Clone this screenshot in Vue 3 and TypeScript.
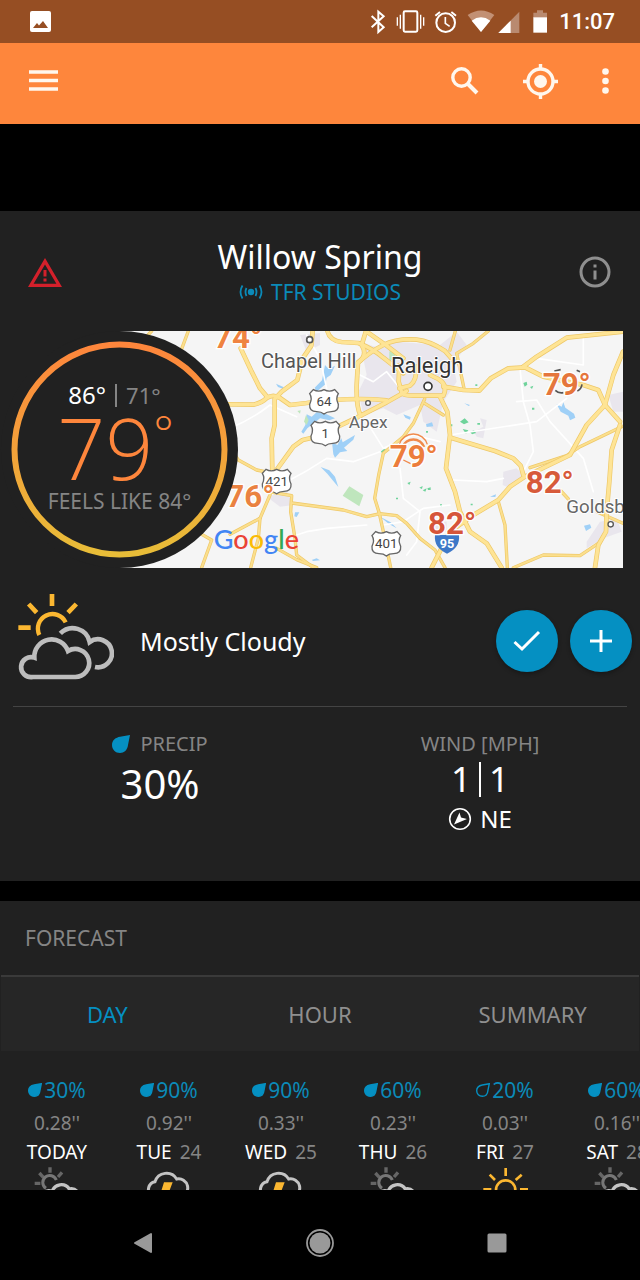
<script setup lang="ts">
import { ref } from 'vue'

type Sky = 'partly' | 'storm' | 'sunny'
interface Day {
  name: string
  date: string
  chance: string
  amount: string
  sky: Sky
  hollow?: boolean
}
interface Reading {
  temp: string
  x: number
  y: number
  color: string
}
interface Shield {
  n: string
  x: number
  y: number
}

const tabs = ['DAY', 'HOUR', 'SUMMARY']
const activeTab = ref('DAY')

const days: Day[] = [
  { name: 'TODAY', date: '', chance: '30%', amount: "0.28''", sky: 'partly' },
  { name: 'TUE', date: '24', chance: '90%', amount: "0.92''", sky: 'storm' },
  { name: 'WED', date: '25', chance: '90%', amount: "0.33''", sky: 'storm' },
  { name: 'THU', date: '26', chance: '60%', amount: "0.23''", sky: 'partly' },
  { name: 'FRI', date: '27', chance: '20%', amount: "0.03''", sky: 'sunny', hollow: true },
  { name: 'SAT', date: '28', chance: '60%', amount: "0.16''", sky: 'partly' },
]

const dropPath = 'M18 0 L16 10 C15.500 15 12 18 8 18 C3.500 18 0 14.500 0 10 C0 5 4 2.500 8 1.800 Z'

const highways: string[] = [
  'M240 237 L400 239 Q425 234 440 219 Q460 206 480 219 L510 240 L560 234 Q690 215 800 226',
  'M578 18 L574 62 L548 100 L532 165 L485 200 L464 222 L464 300 L455 340 L457 440',
  'M362 70 L395 140 L420 190 L442 216',
  'M622 18 Q630 48 665 51 L715 54 Q760 72 790 98 L850 145',
  'M738 18 L725 60 Q745 92 714 112 L710 180 Q708 245 722 272',
  'M712 115 Q750 80 790 60 Q830 40 890 44 Q930 48 975 78 L1005 112',
  'M740 20 L800 62 L850 100',
  'M838 120 L836 170 L846 205 Q856 212 880 212 L970 212 Q985 180 955 162 L930 150',
  'M888 125 Q892 165 870 182 L838 190',
  'M455 455 L520 365 L548 345 L590 335 L710 278 L800 232 L860 198',
  'M970 185 L1030 195 L1078 197 L1112 160 L1165 130 L1215 127 L1270 155 L1390 180 L1435 195 L1455 240 L1500 290',
  'M1210 125 L1250 95 L1340 38 L1509 20',
  'M1509 80 L1480 150 L1455 240 L1400 300 L1350 390 L1215 455 L1170 485 L1135 525 L1060 570 L990 620 L935 728',
  'M1500 300 L1475 375 L1468 470 L1460 560 L1458 620 L1435 660 L1425 728',
  'M960 215 L982 260 L990 330 L978 430 L1005 500 L1020 560 L1050 620 L1100 655 L1145 728',
  'M992 338 L1125 378 L1180 400 L1202 422 L1210 450',
]
const roads: string[] = [
  'M1006 18 L990 75',
  'M1105 18 L1060 55 L1010 85 L1032 190',
  'M1505 305 L1380 365 L1340 392 L1230 428',
  'M1135 530 L1155 600 L1162 728',
  'M1180 728 L1270 690 L1380 692 L1435 655',
  'M914 222 L880 295 L850 335 L790 385 L776 450 L764 520 L778 565 L790 620 L812 728',
  'M515 534 L670 555 L740 575 L780 566 L830 572 L860 595 L900 640 L945 675 L975 728',
  'M330 370 L355 405 L410 435 L460 445 L450 510 L420 580 L415 640 L392 728',
  'M420 580 L330 628',
  'M445 500 L515 512 L512 560 L525 640 L530 690 L580 728',
  'M470 670 L530 704 L590 728',
  'M205 18 L180 85',
  'M95 18 L80 34',
  'M240 625 L275 645 L245 728',
  'M914 235 L970 270',
  'M1320 495 L1345 522',
  'M1430 560 L1509 595',
]
const lanes: string[] = [
  'M330 310 Q400 280 450 240 L530 275',
  'M500 470 Q560 440 620 400 L700 410 L780 380',
  'M500 640 L560 620 L620 610 L740 600',
  'M560 30 L600 100 L620 190',
  'M740 290 L790 370 L880 330 L960 350',
  'M720 150 L760 170 L800 140 L840 190',
  'M990 330 L1250 290 L1340 220',
  'M1200 130 L1210 230 L1230 300 L1240 380 L1210 440',
  'M1190 230 L1250 225 L1290 290 L1390 400 L1420 500',
  'M1000 465 L1100 470 L1150 460',
  'M1390 30 L1390 120 L1250 100',
  'M840 430 L850 520 L900 560 L890 650 L860 690',
  'M790 600 L850 590 L910 550 L990 540',
]
const readings: Reading[] = [
  { temp: '74°', x: 282, y: 70, color: '#ef8340' },
  { temp: '79°', x: 809, y: 427, color: '#ec7d3c' },
  { temp: '76°', x: 319, y: 545, color: '#ea8241' },
  { temp: '79°', x: 1268, y: 209, color: '#e5763c' },
  { temp: '82°', x: 1217, y: 505, color: '#d75a3a' },
  { temp: '82°', x: 924, y: 628, color: '#d6553a' },
]
const shields: Shield[] = [
  { n: '64', x: 612, y: 230 },
  { n: '1', x: 616, y: 325 },
  { n: '421', x: 470, y: 469 },
  { n: '401', x: 799, y: 656 },
]
const shieldPath =
  'M-32 -36 Q-16 -27 0 -36 Q16 -27 32 -36 L43 -24 Q34 -10 43 8 Q45 30 22 30 Q8 30 0 37 Q-8 30 -22 30 Q-45 30 -43 8 Q-34 -10 -43 -24 Z'
</script>

<template>
  <div class="shell">
    <div class="status">
      <svg class="notif" viewBox="0 0 21 21" aria-hidden="true">
        <rect width="21" height="21" rx="2" fill="#fff" />
        <path d="M3 17 L7 12 L9 14.500 L13 10 L18 17 Z" fill="#964e23" />
      </svg>
      <svg class="sysicons" viewBox="90 24 540 81" fill="none" stroke="#fff" aria-hidden="true">
        <path d="M98 48 L134 82 L118 96 V35 L134 49 L98 82" stroke-width="6" />
        <rect x="194" y="34" width="41" height="61" rx="4" stroke-width="6" />
        <path d="M184 44 V86 M175 52 V77 M245 44 V86 M254 52 V77" stroke-width="4" />
        <circle cx="320" cy="68" r="28" stroke-width="6" />
        <path d="M319 51 V70 L332 79" stroke-width="5" />
        <path d="M289 47 L303 36 M351 47 L337 36" stroke-width="6" />
        <path d="M386 45 Q426 18 466 45 L426 96 Z" fill="#c29074" stroke="none" />
        <path d="M398 62 Q426 42 454 62 L426 96 Z" fill="#fff" stroke="none" />
        <path d="M541 35 V99 H478 Z" fill="#b98a70" stroke="none" />
        <path d="M515 62 V99 H478 Z" fill="#fff" stroke="none" />
        <path d="M583 38 H594 V31 H612 V38 H624 V54 H583 Z" fill="#b98a70" stroke="none" />
        <path d="M583 52 H624 V98 H583 Z" fill="#fff" stroke="none" />
      </svg>
      <span class="clock">11:07</span>
    </div>

    <header class="toolbar">
      <button class="bare" aria-label="Menu">
        <svg width="29" height="22" viewBox="0 0 29 22"><path d="M0 2 H29 M0 10.500 H29 M0 19 H29" stroke="#fff7ee" stroke-width="3.500" /></svg>
      </button>
      <div class="actions">
        <button class="bare" aria-label="Search">
          <svg width="28" height="28" viewBox="0 0 28 28" fill="none" stroke="#fff7ee"><circle cx="10.500" cy="10.500" r="8.700" stroke-width="3.400" /><path d="M17 17 L26 26" stroke-width="4" /></svg>
        </button>
        <button class="bare" aria-label="My location">
          <svg width="35" height="35" viewBox="0 0 35 35" fill="none" stroke="#fff7ee" stroke-width="3.400"><circle cx="17.500" cy="17.500" r="12.500" /><circle cx="17.500" cy="17.500" r="6.500" fill="#fff7ee" stroke="none" /><path d="M17.500 0 V5 M17.500 30 V35 M0 17.500 H5 M30 17.500 H35" /></svg>
        </button>
        <button class="bare" aria-label="More options">
          <svg width="7" height="26" viewBox="0 0 7 26" fill="#fff7ee"><circle cx="3.500" cy="3.500" r="3.300" /><circle cx="3.500" cy="13" r="3.300" /><circle cx="3.500" cy="22.500" r="3.300" /></svg>
        </button>
      </div>
    </header>

    <main class="content">
      <section class="card">
        <div class="place">
          <button class="bare" aria-label="Weather alert">
            <svg width="34" height="29" viewBox="0 0 34 29"><path d="M17 0 L34 29 H0 Z M17 6.500 L5.600 25.800 H28.400 Z" fill="#d3202b" fill-rule="evenodd" /><path d="M17 12 V18.500 M17 20.500 V23.500" stroke="#d3202b" stroke-width="3" /></svg>
          </button>
          <div class="names">
            <h1>Willow Spring</h1>
            <a href="#station">
              <svg width="24" height="14" viewBox="0 0 24 14" fill="none" stroke="#0b8ab8" stroke-width="1.800" aria-hidden="true"><circle cx="12" cy="7" r="3.200" fill="#0b8ab8" stroke="none" /><path d="M7.500 3 Q5.500 7 7.500 11 M16.500 3 Q18.500 7 16.500 11 M3.500 0.500 Q-0.500 7 3.500 13.500 M20.500 0.500 Q24.500 7 20.500 13.500" /></svg>
              <span>TFR STUDIOS</span>
            </a>
          </div>
          <button class="bare" aria-label="Information">
            <svg width="32" height="32" viewBox="0 0 32 32" fill="none" stroke="#8f8f8f" stroke-width="3"><circle cx="16" cy="16" r="14" /><path d="M16 14.500 V23.500 M16 8.500 V11.500" /></svg>
          </button>
        </div>

        <div class="hero">
          <svg class="map" viewBox="0 18 1509 711" preserveAspectRatio="xMidYMid slice" role="img" aria-label="Temperature map">
            <rect y="18" width="1509" height="711" fill="#f5f5f5" />
            <g fill="#e9e6ed">
              <path d="M720 50 L780 70 L830 50 L960 60 L1010 20 L1040 60 L1000 120 L1010 170 L970 230 L950 320 L910 290 L900 240 L830 270 L790 250 L730 270 L715 200 L740 150 Z" />
              <path d="M540 30 L600 24 L600 60 L560 80 Z M1150 440 L1190 430 L1210 450 L1170 490 L1148 480 Z M1440 590 L1490 580 L1505 620 L1450 640 L1400 670 L1400 650 Z" />
              <path d="M1062 320 L1090 305 L1080 280 L1100 285 L1090 340 L1070 335 Z M1465 210 L1509 200 L1509 260 L1480 260 Z M440 515 L500 500 L520 540 L480 545 Z M930 590 L980 590 L980 620 L940 620 Z M815 100 L835 90 L840 130 L815 140 Z" />
            </g>
            <g fill="#9fd0f7">
              <path d="M615 120 L626 132 L645 122 L632 150 L620 158 L616 178 L590 200 L584 188 L606 166 Z" />
              <path d="M560 268 L575 275 L590 262 L620 268 L645 280 L628 286 L600 280 L585 292 L562 310 L550 326 L544 320 L556 300 Z" />
              <path d="M636 352 L652 360 L664 340 L668 352 L705 330 L700 344 L672 368 L682 378 L660 382 L645 398 L640 388 Z" />
              <path d="M602 426 L628 436 L645 455 L655 486 L638 466 L622 446 Z M468 176 L490 186 L490 192 L474 186 Z M525 562 L538 562 L530 576 L523 574 Z M575 705 L590 700 L600 706 L580 708 Z" />
              <path d="M1310 238 L1325 245 L1330 232 L1336 248 L1362 266 L1366 278 L1350 286 L1345 272 L1322 260 Z M1392 602 L1410 598 L1414 608 L1398 618 Z M1110 515 L1128 508 L1126 516 Z M1033 235 L1050 240 L1046 243 Z M850 268 L872 276 L870 284 L856 278 Z M918 298 L936 292 L940 304 L920 306 Z M780 575 L812 592 L830 610 L806 596 Z" />
            </g>
            <g fill="#bfe6bd">
              <path d="M688 484 L730 510 L718 544 L668 512 Z" />
              <path d="M808 80 L818 68 L828 96 L808 110 Z" />
              <path d="M558 270 L566 285 L560 300 L552 290 Z M532 258 L542 256 L540 266 Z" />
            </g>
            <g fill="#6fd39b">
              <path d="M1020 290 L1034 280 L1046 292 L1032 298 Z M1028 312 L1045 316 L1038 326 Z M1050 320 L1062 316 L1068 324 L1056 328 Z M990 298 h7 v6 h-7 Z M1072 294 h8 v5 h-8 Z M1210 174 l10 -4 l2 9 l-8 6 Z M1230 186 l10 -4 l-4 10 Z M1236 248 h7 v6 h-7 Z M1066 178 h6 v5 h-6 Z M988 322 h8 v8 h-8 Z" />
              <path d="M782 380 L792 372 L802 376 L790 386 Z M862 474 l10 -4 l-4 10 Z M898 488 l10 -5 l-2 9 Z M908 496 l12 -6 l-4 10 Z M922 490 l10 -3 v8 h-8 Z M828 518 h6 v5 h-6 Z M960 538 h6 v8 h-6 Z M1052 536 h6 v5 h-6 Z M918 318 h6 v5 h-6 Z" />
            </g>
            <g fill="none" stroke-linejoin="round" stroke-linecap="round">
              <path v-for="d in lanes" :key="d" :d="d" stroke="#fff" stroke-width="5" />
              <path v-for="d in roads" :key="'c' + d" :d="d" stroke="#eec868" stroke-width="10" />
              <path v-for="d in roads" :key="'i' + d" :d="d" stroke="#fbdf8d" stroke-width="6" />
              <path v-for="d in highways" :key="'c' + d" :d="d" stroke="#eec868" stroke-width="14" />
              <path v-for="d in highways" :key="'i' + d" :d="d" stroke="#fee495" stroke-width="10" />
            </g>
            <g fill="#fff" stroke="#555" stroke-width="5">
              <circle cx="569" cy="44" r="9" />
              <circle cx="924" cy="184" r="12" stroke="#333" />
              <circle cx="744" cy="234" r="7" stroke-width="4" />
              <circle cx="1472" cy="598" r="8" stroke-width="4" />
            </g>
            <g class="towns">
              <text x="423" y="129" font-size="60" fill="#555">Chapel Hill</text>
              <text x="813" y="143" font-size="66" fill="#333">Raleigh</text>
              <text x="686" y="308" font-size="52" fill="#666">Apex</text>
              <text x="1339" y="564" font-size="56" fill="#666">Goldsboro</text>
            </g>
            <g v-for="s in shields" :key="s.n" class="shield" :transform="`translate(${s.x} ${s.y})`">
              <path :d="shieldPath" fill="#fff" stroke="#666" stroke-width="4" />
              <text y="14" text-anchor="middle" font-size="40" fill="#444">{{ s.n }}</text>
            </g>
            <path d="M1303 138 L1322 134 M1370 136 L1380 140 M1386 178 Q1384 192 1372 198 M1306 196 Q1316 206 1330 203" fill="none" stroke="#555" stroke-width="5" />
            <g transform="translate(981 652)">
              <path d="M-36 -22 H36 Q40 16 0 34 Q-40 16 -36 -22 Z" fill="#3d78c8" />
              <text y="16" text-anchor="middle" font-size="38" font-weight="700" fill="#fff" class="route">95</text>
            </g>
            <g fill="none" stroke="#f08a4c" stroke-width="4">
              <path d="M838 358 A44 44 0 0 1 922 358" />
              <path d="M848 366 A34 34 0 0 1 912 366" stroke-width="8" />
              <path d="M850 405 L872 416" />
            </g>
            <g class="readings">
              <text v-for="r in readings" :key="r.x" :x="r.x" :y="r.y" :fill="r.color">{{ r.temp }}</text>
            </g>
            <text class="wordmark" x="281" y="672"><tspan fill="#4285f4">G</tspan><tspan fill="#ea4335">o</tspan><tspan fill="#fbbc05">o</tspan><tspan fill="#4285f4">g</tspan><tspan fill="#34a853">l</tspan><tspan fill="#ea4335">e</tspan></text>
          </svg>

          <div class="gauge">
            <svg class="ring" viewBox="0 0 237 237" aria-hidden="true">
              <defs>
                <linearGradient id="heat" x1="0" y1="0" x2="0" y2="1">
                  <stop offset="0" stop-color="#fe863c" />
                  <stop offset="1" stop-color="#e8bd38" />
                </linearGradient>
              </defs>
              <circle cx="118.500" cy="118.500" r="105" fill="none" stroke="url(#heat)" stroke-width="6" />
            </svg>
            <div class="range">
              <span class="high">86°</span>
              <span class="bar"></span>
              <span class="low">71°</span>
            </div>
            <div class="now"><span>79</span><span class="deg">°</span></div>
            <div class="feels">FEELS LIKE 84°</div>
          </div>
        </div>

        <div class="condition">
          <svg class="sky" viewBox="54 42 288 282" fill="none" aria-hidden="true">
            <g stroke="#fbb731" stroke-width="14">
              <path d="M156 42 V78 M86 72 L110 98 M229 72 L204 98 M55 143 H92" />
              <path d="M118 165 A43 43 0 1 1 197 127" stroke-width="13" />
            </g>
            <g stroke="#bdbdbd" stroke-width="14">
              <path d="M181 160 A52 52 0 0 1 269 186 A42 42 0 1 1 285 261" />
              <path d="M98 291 A30 30 0 1 1 103 233 A52 52 0 0 1 204 213 A42 42 0 1 1 224 291 Z" />
            </g>
          </svg>
          <p>Mostly Cloudy</p>
          <button class="fab" aria-label="Confirm conditions">
            <svg width="28" height="22" viewBox="0 0 28 22"><path d="M1.500 12 L9 19 L26 2" fill="none" stroke="#fff" stroke-width="3" /></svg>
          </button>
          <button class="fab" aria-label="Add report">
            <svg width="22" height="22" viewBox="0 0 22 22"><path d="M11 0 V22 M0 11 H22" stroke="#fff" stroke-width="3" /></svg>
          </button>
        </div>

        <hr />
        <div class="metrics">
          <div class="metric">
            <div class="label">
              <svg width="18" height="18" viewBox="0 0 18 18" aria-hidden="true"><path :d="dropPath" fill="#0590c2" /></svg>
              <span>PRECIP</span>
            </div>
            <div class="percent">30%</div>
          </div>
          <div class="metric">
            <div class="label">WIND [MPH]</div>
            <div class="wind"><span>1</span><span class="bar tall"></span><span>1</span></div>
            <div class="heading">
              <svg width="24" height="24" viewBox="0 0 24 24" aria-hidden="true"><circle cx="12" cy="12" r="10.300" fill="none" stroke="#fff" stroke-width="1.600" /><path d="M6 17.500 L11.500 5.500 L13 10.500 L19 12 Z" fill="#fff" /></svg>
              <span>NE</span>
            </div>
          </div>
        </div>
      </section>

      <section class="card">
        <h2>FORECAST</h2>
        <div class="tabs" role="tablist">
          <button v-for="t in tabs" :key="t" role="tab" :aria-selected="t === activeTab" :class="{ active: t === activeTab }" @click="activeTab = t">{{ t }}</button>
        </div>
        <div class="days">
          <div v-for="d in days" :key="d.name" class="day">
            <div class="chance">
              <svg width="14" height="14" viewBox="-1 -1 20 20" aria-hidden="true"><path :d="dropPath" :fill="d.hollow ? 'none' : '#0590c2'" stroke="#0590c2" stroke-width="2" /></svg>
              <span>{{ d.chance }}</span>
            </div>
            <div class="amount">{{ d.amount }}</div>
            <div class="date"><span>{{ d.name }}</span><span v-if="d.date" class="num">{{ d.date }}</span></div>
            <svg width="50" height="50" viewBox="0 0 150 150" fill="none" aria-hidden="true">
              <template v-if="d.sky === 'partly'">
                <path d="M54 7 V23 M22 24 L34 37 M90 22 L78 36 M8 55 H25" stroke="#666" stroke-width="10" />
                <path d="M42 70 A21 21 0 1 1 73 45" stroke="#777" stroke-width="9" />
                <path d="M40 115 A20 20 0 0 1 60 80 A29 29 0 0 1 112 72 A24 24 0 0 1 136 80" stroke="#c4c4c4" stroke-width="10" />
              </template>
              <template v-else-if="d.sky === 'storm'">
                <path d="M22 92 A24 24 0 0 1 33 50 A36 36 0 0 1 98 42 A27 27 0 1 1 110 95" stroke="#c4c4c4" stroke-width="9" />
                <path d="M60 52 H86 L76 78 H90 L50 125 L60 90 H48 Z" fill="#fbb731" />
              </template>
              <template v-else>
                <circle cx="77" cy="75" r="29" stroke="#fbb731" stroke-width="8" />
                <path d="M77 9 V33 M29 29 L45 45 M125 29 L107 45 M10 73 H34 M120 73 H144" stroke="#fbb731" stroke-width="8" />
              </template>
            </svg>
          </div>
        </div>
      </section>
    </main>

    <nav class="sysnav">
      <button class="bare" aria-label="Back"><svg width="20" height="22" viewBox="0 0 20 22"><path d="M18 2 V20 L2 11 Z" fill="#999" stroke="#999" stroke-width="2" stroke-linejoin="round" /></svg></button>
      <button class="bare" aria-label="Home"><svg width="30" height="30" viewBox="0 0 30 30"><circle cx="15" cy="15" r="13" fill="none" stroke="#999" stroke-width="1.800" /><circle cx="15" cy="15" r="10.500" fill="#999" /></svg></button>
      <button class="bare" aria-label="Overview"><svg width="20" height="20" viewBox="0 0 20 20"><rect x="0.500" y="0.500" width="19" height="19" rx="1.500" fill="#999" /></svg></button>
    </nav>
  </div>
</template>

<style>
body {
  background: #000;
}
</style>

<style scoped>
* {
  box-sizing: border-box;
}
.shell {
  height: 100vh;
  display: flex;
  flex-direction: column;
  overflow: hidden;
  background: #000;
  color: #fff;
  font-family: "Noto Sans", "Open Sans", sans-serif;
}
svg {
  display: block;
}
button {
  border: 0;
  padding: 0;
  color: inherit;
  font: inherit;
  cursor: pointer;
}
.bare {
  background: none;
  display: grid;
  place-items: center;
}
.status {
  flex: none;
  height: 43px;
  display: flex;
  align-items: center;
  padding: 0 25px 0 30px;
  background: #964e23;
}
.notif {
  width: 21px;
  height: 21px;
}
.sysicons {
  width: 180px;
  height: 27px;
  margin-left: auto;
}
.clock {
  margin-left: 10px;
  font: 500 22px/28px Roboto, sans-serif;
}
.toolbar {
  flex: none;
  height: 81px;
  display: flex;
  align-items: center;
  justify-content: space-between;
  padding: 0 31px 5px 29px;
  background: #fe863c;
}
.actions {
  display: flex;
  align-items: center;
  gap: 44px;
}
.content {
  flex: 1;
  min-height: 0;
  overflow: hidden;
  padding-top: 87px;
}
.card {
  background: #212121;
  margin-bottom: 20px;
}
.place {
  height: 120px;
  display: grid;
  grid-template-columns: 90px 1fr 90px;
  align-items: center;
  padding-top: 2px;
}
.names {
  text-align: center;
}
h1 {
  margin: 0;
  font-size: 32px;
  font-weight: 400;
  line-height: 40px;
}
.names a {
  display: flex;
  align-items: center;
  justify-content: center;
  gap: 8px;
  color: #0b8ab8;
  font-size: 21px;
  line-height: 30px;
  text-decoration: none;
}
.hero {
  position: relative;
  padding: 0 17px 0 120px;
}
.map {
  width: 100%;
  height: 237px;
}
.towns text,
.shield text,
.route {
  font-family: Roboto, sans-serif;
}
.towns text {
  stroke: #fff;
  stroke-width: 6px;
  paint-order: stroke;
}
.readings text {
  font-family: Roboto, sans-serif;
  font-size: 94px;
  font-weight: 700;
  stroke: #fff;
  stroke-width: 8px;
  paint-order: stroke;
}
.wordmark {
  font-family: Lato, sans-serif;
  font-size: 81px;
  font-weight: 500;
}
.gauge {
  position: absolute;
  left: 1px;
  top: 0;
  width: 237px;
  height: 237px;
  padding-top: 50px;
  border-radius: 50%;
  background: #212121;
  text-align: center;
}
.ring {
  position: absolute;
  inset: 0;
}
.range {
  display: flex;
  align-items: center;
  justify-content: center;
  gap: 9px;
  height: 28px;
  padding-right: 10px;
  font-size: 22px;
  line-height: 28px;
}
.high {
  font-size: 24px;
}
.low,
.feels,
.label,
.amount,
.num {
  color: #858585;
}
.bar {
  width: 2px;
  height: 23px;
  background: #858585;
}
.now {
  display: flex;
  justify-content: center;
  height: 80px;
  padding-right: 8px;
  color: #fe863c;
  font-family: "Open Sans", "Noto Sans", sans-serif;
  font-size: 84px;
  font-weight: 300;
  line-height: 78px;
}
.deg {
  font-size: 48px;
  line-height: 48px;
}
.feels {
  font-size: 21px;
  line-height: 24px;
}
.condition {
  height: 138px;
  display: flex;
  align-items: center;
  gap: 12px;
  padding: 8px 8px 0 18px;
}
.sky {
  width: 96px;
  height: 94px;
}
.condition p {
  flex: 1;
  margin: 0 0 0 14px;
  font-size: 25px;
  line-height: 32px;
}
.fab {
  width: 62px;
  height: 62px;
  border-radius: 50%;
  display: grid;
  place-items: center;
  background: #0590c2;
  box-shadow: 0 2px 4px rgba(0, 0, 0, 0.3);
}
hr {
  height: 1px;
  margin: 0 13px;
  border: 0;
  background: #444;
}
.metrics {
  display: grid;
  grid-template-columns: 1fr 1fr;
  height: 174px;
  padding-top: 22px;
}
.metric {
  display: flex;
  flex-direction: column;
  align-items: center;
}
.label {
  display: flex;
  align-items: center;
  gap: 10px;
  font-size: 20px;
  line-height: 30px;
}
.percent {
  font-size: 40px;
  line-height: 50px;
}
.wind {
  display: flex;
  align-items: center;
  gap: 8px;
  font-size: 35px;
  line-height: 40px;
}
.tall {
  height: 35px;
  background: #fff;
}
.heading {
  display: flex;
  align-items: center;
  gap: 8px;
  font-size: 24px;
  line-height: 40px;
}
h2 {
  margin: 0;
  padding: 0 25px;
  color: #858585;
  font-size: 21px;
  font-weight: 400;
  line-height: 74px;
}
.tabs {
  display: grid;
  grid-template-columns: repeat(3, 1fr);
  margin: 0 1px;
  border-top: 2px solid #3a3a3a;
  background: #262626;
}
.tabs button {
  height: 74px;
  background: none;
  color: #8f8f8f;
  font-size: 22px;
}
.tabs .active {
  color: #0590c2;
}
.days {
  display: flex;
  overflow: hidden;
  padding: 22px 0 0 1px;
}
.day {
  flex: 0 0 112px;
  display: flex;
  flex-direction: column;
  align-items: center;
}
.chance {
  display: flex;
  align-items: center;
  gap: 2px;
  color: #0b8ab8;
  font-size: 21px;
  line-height: 34px;
}
.amount {
  font-size: 19px;
  line-height: 32px;
}
.date {
  display: flex;
  gap: 8px;
  font-size: 19px;
  line-height: 26px;
}
.sysnav {
  flex: none;
  height: 90px;
  display: grid;
  grid-template-columns: repeat(3, 1fr);
  padding: 15px 54px 0;
  background: #000;
}
</style>
